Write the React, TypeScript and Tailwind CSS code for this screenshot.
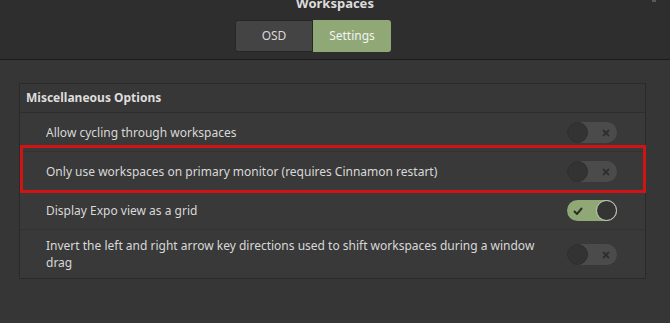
import React from "react";

function Toggle({ on }: { on: boolean }) {
  if (on) {
    return (
      <div className="relative w-[50px] h-[21px] rounded-full bg-[#8fa876] flex items-center shrink-0">
        <svg width="10" height="8" viewBox="0 0 10 8" className="absolute left-[6px] top-[7px]">
          <path d="M1 4 L4 7 L9 1" stroke="#2a2f24" strokeWidth="2" fill="none" />
        </svg>
        <div className="absolute right-0 top-0 w-[21px] h-[21px] rounded-full bg-[#343434] border border-[#c9d3bd]" />
      </div>
    );
  }
  return (
    <div className="relative w-[50px] h-[21px] rounded-full bg-[#4b4b4b] flex items-center shrink-0">
      <div className="absolute left-0 top-0 w-[21px] h-[21px] rounded-full bg-[#333333] border border-[#2c2c2c]" />
      <svg width="8" height="8" viewBox="0 0 8 8" className="absolute right-[7px] top-[7px]">
        <path d="M1 1 L7 7 M7 1 L1 7" stroke="#2e2e2e" strokeWidth="1.8" />
      </svg>
    </div>
  );
}

function Row({ text, on, h, last }: { text: React.ReactNode; on: boolean; h: string; last?: boolean }) {
  return (
    <div className={`flex items-center justify-between pl-[26px] pr-[28px] ${h} ${last ? "" : "border-b border-[#333333]"}`}>
      <div className="text-[12px] leading-[17px] text-[#d8d8d8] w-[500px]">{text}</div>
      <Toggle on={on} />
    </div>
  );
}

export default function App() {
  return (
    <div className="w-[670px] h-[323px] bg-[#363636] overflow-hidden" style={{ fontFamily: '"Noto Sans", sans-serif' }}>
      <div className="relative h-[60px] bg-[#2e2e2e] border-b border-[#1c1c1c]">
        <div className="absolute left-0 right-0 top-[-6px] text-center text-[13px] font-bold text-[#dcdcdc] leading-[18px]">Workspaces</div>
        <div className="absolute left-[652px] top-0 w-[4px] h-[2px] bg-[#5a5a5a]" />
        <div className="flex pt-[20px] pl-[235px]">
          <div className="w-[78px] h-[32px] bg-[#444444] border border-[#272727] rounded-l-[3px] flex items-center justify-center text-[12px] text-[#d8d8d8]">OSD</div>
          <div className="w-[78px] h-[32px] bg-[#8fa876] rounded-r-[3px] flex items-center justify-center text-[12px] text-[#f3f3f3]">Settings</div>
        </div>
      </div>
      <div className="pt-[23px] pl-[19px]">
        <div className="relative w-[627px] bg-[#393939] border border-[#2a2a2a]">
          <div className="h-[29px] flex items-center pl-[6px] border-b border-[#2e2e2e] bg-[#373737] text-[12px] font-bold text-[#dedede]">
            Miscellaneous Options
          </div>
          <Row text="Allow cycling through workspaces" on={false} h="h-[39px]" />
          <Row text="Only use workspaces on primary monitor (requires Cinnamon restart)" on={false} h="h-[39px]" />
          <Row text="Display Expo view as a grid" on={true} h="h-[39px]" />
          <Row
            text="Invert the left and right arrow key directions used to shift workspaces during a window drag"
            on={false}
            h="h-[48px]"
            last
          />
          <div className="absolute left-0 right-[-1px] top-[61px] h-[48px] border-[3px] border-[#d01313]" />
        </div>
      </div>
    </div>
  );
}
